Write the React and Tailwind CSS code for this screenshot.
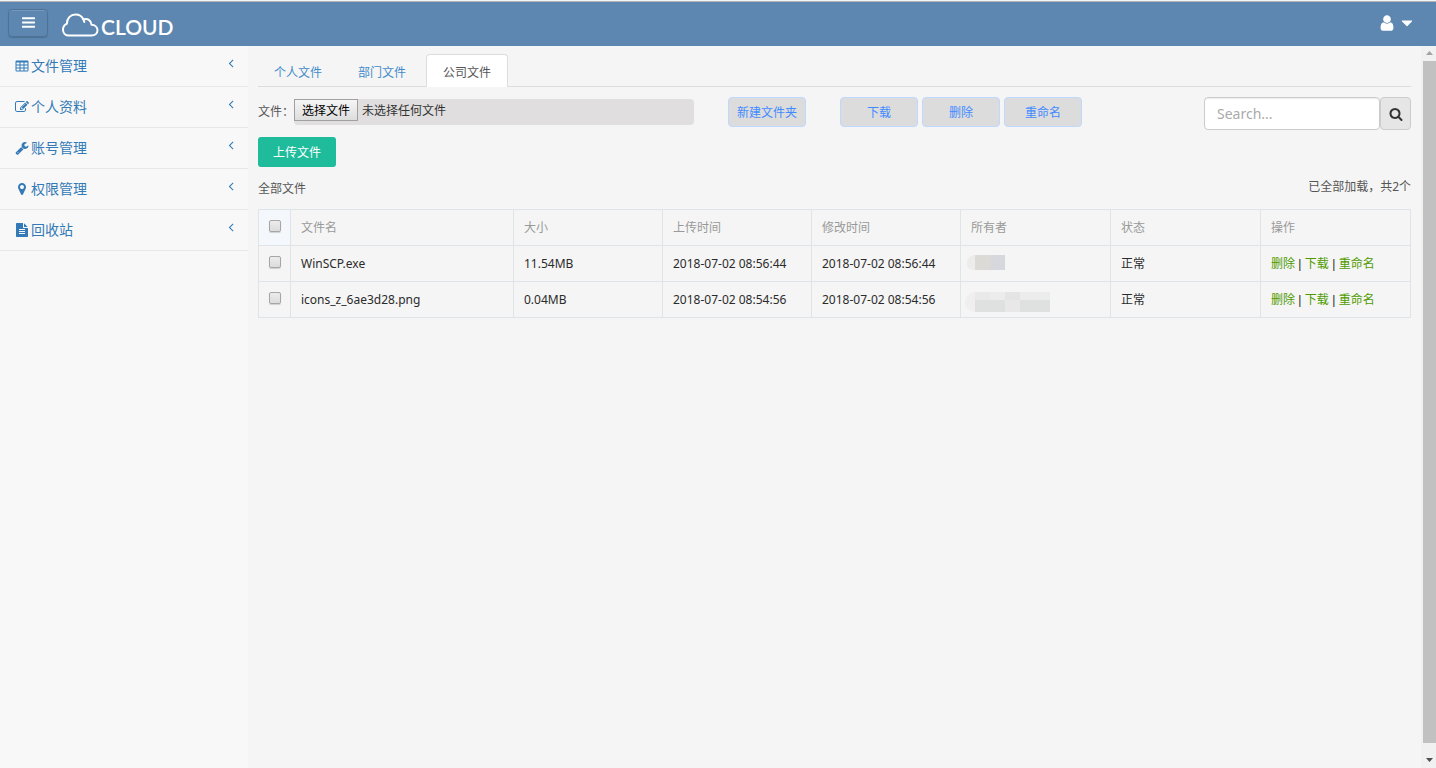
import { useState } from 'react';

const ICONS = {
  bars: 'M1664 1344v128q0 26-19 45t-45 19h-1408q-26 0-45-19t-19-45v-128q0-26 19-45t45-19h1408q26 0 45 19t19 45zm0-512v128q0 26-19 45t-45 19h-1408q-26 0-45-19t-19-45v-128q0-26 19-45t45-19h1408q26 0 45 19t19 45zm0-512v128q0 26-19 45t-45 19h-1408q-26 0-45-19t-19-45v-128q0-26 19-45t45-19h1408q26 0 45 19t19 45z',
  user: 'M1536 1399q0 109-62.5 187t-150.5 78h-854q-88 0-150.5-78t-62.5-187q0-85 8.5-160.5t31.5-152 58.5-131 94-89 134.5-34.5q131 128 313 128t313-128q76 0 134.5 34.5t94 89 58.5 131 31.5 152 8.5 160.5zm-256-887q0 159-112.5 271.5t-271.5 112.5-271.5-112.5-112.5-271.5 112.5-271.5 271.5-112.5 271.5 112.5 112.5 271.5z',
  caretDown: 'M1408 704q0 26-19 45l-448 448q-19 19-45 19t-45-19l-448-448q-19-19-19-45t19-45 45-19h896q26 0 45 19t19 45z',
  angleLeft: 'M1203 544q0 13-10 23l-393 393 393 393q10 10 10 23t-10 23l-50 50q-10 10-23 10t-23-10l-466-466q-10-10-10-23t10-23l466-466q10-10 23-10t23 10l50 50q10 10 10 23z',
  search: 'M1216 832q0-185-131.5-316.5t-316.5-131.5-316.5 131.5-131.5 316.5 131.5 316.5 316.5 131.5 316.5-131.5 131.5-316.5zm512 832q0 52-38 90t-90 38q-54 0-90-38l-343-342q-179 124-399 124-143 0-273.5-55.5t-225-150-150-225-55.5-273.5 55.5-273.5 150-225 225-150 273.5-55.5 273.5 55.5 225 150 150 225 55.5 273.5q0 220-124 399l343 343q37 37 37 90z',
  table: 'M224 192h1344a160 160 0 0 1 160 160v1088a160 160 0 0 1-160 160h-1344a160 160 0 0 1-160-160v-1088a160 160 0 0 1 160-160zM192 448v256h384v-256zM704 448v256h384v-256zM1216 448v256h384v-256zM192 832v256h384v-256zM704 832v256h384v-256zM1216 832v256h384v-256zM192 1216v256h384v-256zM704 1216v256h384v-256zM1216 1216v256h384v-256z',
  edit: 'M888 1184l116-116-152-152-116 116v56h96v96h56zm440-720q-16-16-33 1l-350 350q-17 17-1 33t33-1l350-350q17-17 1-33zm80 594v190q0 119-84.5 203.5t-203.5 84.5h-832q-119 0-203.5-84.5t-84.5-203.5v-832q0-119 84.5-203.5t203.5-84.5h832q63 0 117 25 15 7 18 23 3 17-9 29l-49 49q-14 14-32 8-23-6-45-6h-832q-66 0-113 47t-47 113v832q0 66 47 113t113 47h832q66 0 113-47t47-113v-126q0-13 9-22l64-64q15-15 35-7t20 29zm-96-738l288 288-672 672h-288v-288zm444 132l-92 92-288-288 92-92q28-28 68-28t68 28l152 152q28 28 28 68t-28 68z',
  wrench: 'M448 1472q0-26-19-45t-45-19-45 19-19 45 19 45 45 19 45-19 19-45zm644-420l-682 682q-37 37-90 37-52 0-91-37l-106-108q-38-36-38-90 0-53 38-91l681-681q39 98 114.5 173.5t173.5 114.5zm634-435q0 39-23 106-47 134-164.5 217.5t-258.5 83.5q-185 0-316.5-131.5t-131.5-316.5 131.5-316.5 316.5-131.5q58 0 121.5 16.5t107.5 46.5q16 11 16 28t-16 28l-293 169v224l193 107q5-3 79-48.5t135.5-81 70.5-35.5q15 0 23.5 10t8.5 25z',
  marker: 'M1152 640q0-106-75-181t-181-75-181 75-75 181 75 181 181 75 181-75 75-181zm256 0q0 109-33 179l-364 774q-16 33-47.5 52t-67.5 19-67.5-19-46.5-52l-365-774q-33-70-33-179 0-212 150-362t362-150 362 150 150 362z',
  file: 'M1596 476q14 14 28 36h-472v-472q22 14 36 28zm-476 164h544v1056q0 40-28 68t-68 28h-1344q-40 0-68-28t-28-68v-1600q0-40 28-68t68-28h800v544q0 40 28 68t68 28zm160 736v-64q0-14-9-23t-23-9h-704q-14 0-23 9t-9 23v64q0 14 9 23t23 9h704q14 0 23-9t9-23zm0-256v-64q0-14-9-23t-23-9h-704q-14 0-23 9t-9 23v64q0 14 9 23t23 9h704q14 0 23-9t9-23zm0-256v-64q0-14-9-23t-23-9h-704q-14 0-23 9t-9 23v64q0 14 9 23t23 9h704q14 0 23-9t9-23z',
};

const MENU = [
  { icon: 'table', label: '文件管理' },
  { icon: 'edit', label: '个人资料' },
  { icon: 'wrench', label: '账号管理' },
  { icon: 'marker', label: '权限管理' },
  { icon: 'file', label: '回收站' },
];

const TABS = ['个人文件', '部门文件', '公司文件'];

const COLUMNS = ['文件名', '大小', '上传时间', '修改时间', '所有者', '状态', '操作'];

const FILES = [
  { name: 'WinSCP.exe', size: '11.54MB', uploaded: '2018-07-02 08:56:44', modified: '2018-07-02 08:56:44', status: '正常' },
  { name: 'icons_z_6ae3d28.png', size: '0.04MB', uploaded: '2018-07-02 08:54:56', modified: '2018-07-02 08:54:56', status: '正常' },
];

function Icon({ name, className }) {
  return (
    <svg viewBox="0 0 1792 1792" fill="currentColor" fillRule={name === 'table' ? 'evenodd' : 'nonzero'} className={className} aria-hidden="true">
      <path d={ICONS[name]} />
    </svg>
  );
}

function Header() {
  return (
    <header className="flex h-[46px] items-center justify-between border-t border-gray-100 bg-[#5d87b0] pr-5 pb-[2px] pl-2 text-white shadow-[inset_0_1px_0_#b5b5b5]">
      <div className="flex items-center">
        <button
          type="button"
          aria-label="菜单"
          className="flex h-7 w-10 items-center justify-center rounded border border-[#4d7296] shadow-[inset_0_1px_0_#7499bd,0_1px_1px_#4d7296]"
        >
          <Icon name="bars" className="size-[15px]" />
        </button>
        <a href="#" className="ml-[13px] flex items-end gap-[2px] pt-1">
          <svg viewBox="0 0 38 24" className="h-6 w-[38px]" fill="none" stroke="currentColor" strokeWidth="2" strokeLinejoin="round" strokeLinecap="round" aria-hidden="true">
            <path d="M8 22.500h22.500c3.500 0 6-2.200 6-5.200 0-3.100-2.600-5.500-6-5.600-.3-4.300-4-6.700-8-5.200C21 3.200 17.700 1.500 14.500 1.500 9.500 1.500 5.800 5.300 5.900 10.700 3.300 12 2 14 2 16.700c0 3.500 2.500 5.800 6 5.800z" />
            <path d="M22.500 6.500c.5 1 .7 1.600.8 2.500" />
          </svg>
          <span className="font-['Lato'] text-[21px] leading-5 font-semibold">CLOUD</span>
        </a>
      </div>
      <button type="button" aria-label="用户" className="flex items-center gap-[2px]">
        <Icon name="user" className="size-[18px]" />
        <Icon name="caretDown" className="size-[18px]" />
      </button>
    </header>
  );
}

function Sidebar() {
  return (
    <nav className="w-[248px] shrink-0 bg-[#f8f8f8]">
      <ul>
        {MENU.map((m) => (
          <li key={m.label} className="border-b border-[#e7e7e7]">
            <a href="#" className="flex h-10 items-center pr-[10px] pl-[15px] text-sm text-[#337ab7]">
              <Icon name={m.icon} className="mr-[2px] size-[14px]" />
              <span>{m.label}</span>
              <Icon name="angleLeft" className="mb-[6px] ml-auto size-[14px]" />
            </a>
          </li>
        ))}
      </ul>
    </nav>
  );
}

function ToolButton({ children }) {
  return (
    <button type="button" className="h-[30px] w-[78px] rounded border border-[#bfd8ff] bg-[#dcdcdc] pt-[2px] text-[#428bff]">
      {children}
    </button>
  );
}

function Toolbar() {
  const [fileName, setFileName] = useState('');

  return (
    <div className="mt-[10px] flex items-start justify-between">
      <div className="flex">
        <span className="w-9 leading-[30px] whitespace-nowrap">文件：</span>
        <div className="mt-[2px] flex h-[26px] w-[400px] items-start rounded bg-[#e0dede]">
          <input id="upload" type="file" className="peer sr-only" onChange={(e) => setFileName(e.target.files[0]?.name || '')} />
          <label
            htmlFor="upload"
            className="h-[22px] w-16 border border-[#a0a0a0] bg-linear-to-b from-[#f6f6f6] to-[#dddddd] text-center leading-[22px] text-black peer-focus-visible:outline"
          >
            选择文件
          </label>
          <span className="ml-1 leading-6 text-[#333333]">{fileName || '未选择任何文件'}</span>
        </div>
        <div className="ml-[34px] flex">
          <ToolButton>新建文件夹</ToolButton>
          <div className="ml-[34px] flex gap-1">
            <ToolButton>下载</ToolButton>
            <ToolButton>删除</ToolButton>
            <ToolButton>重命名</ToolButton>
          </div>
        </div>
      </div>
      <form className="flex h-[33px]" onSubmit={(e) => e.preventDefault()}>
        <input
          type="text"
          aria-label="Search"
          placeholder="Search..."
          className="w-44 rounded border border-[#cccccc] bg-white px-3 text-sm shadow-[inset_0_1px_1px_rgba(0,0,0,0.08)] placeholder:text-[#aaaaaa]"
        />
        <button type="submit" aria-label="搜索" className="flex w-[31px] items-center justify-center rounded border border-[#cccccc] bg-[#e6e6e6] text-[#333333]">
          <Icon name="search" className="size-[14px]" />
        </button>
      </form>
    </div>
  );
}

function Checkbox({ label }) {
  return (
    <input
      type="checkbox"
      aria-label={label}
      className="mb-1 block size-3 appearance-none rounded-xs border border-[#a6a6a6] bg-linear-to-b from-[#ececec] to-[#dcdcdc] shadow-[0_1px_1px_#d0d0d0] checked:bg-[#428bca]"
    />
  );
}

// owner names are masked with mosaic blocks
function Owner({ index }) {
  if (index === 0) {
    return (
      <svg viewBox="0 0 38 20" className="-ml-1 h-5 w-[38px]" aria-hidden="true">
        <path d="M8 1v15H5a7 7 0 0 1-5-7 8 8 0 0 1 8-8z" fill="#ececea" />
        <path d="M8 1h16v15H8z" fill="#dbdad6" />
        <path d="M24 1h14v15H24z" fill="#d7d8dd" />
      </svg>
    );
  }
  return (
    <svg viewBox="0 0 86 20" className="mt-1 -ml-[6px] h-5 w-[86px]" aria-hidden="true">
      <path d="M10 0v20a10 10 0 0 1 0-20z" fill="#eeefee" />
      <path d="M10 0h75v8H10z" fill="#e9e9e9" />
      <path d="M10 8h75v12H10z" fill="#dfe0e0" />
      <path d="M40 0h15v8H40z" fill="#e4e4e4" />
      <path d="M25 0h15v8H25zM55 0h30v8H55z" fill="#ececec" />
      <path d="M40 8h15v12H40z" fill="#e8e8e8" />
    </svg>
  );
}

function FileTable() {
  return (
    <table className="mt-[10px] w-full table-fixed border-collapse text-left">
      <colgroup>
        <col className="w-8" />
        <col />
        <col className="w-[149px]" />
        <col className="w-[149px]" />
        <col className="w-[149px]" />
        <col className="w-[150px]" />
        <col className="w-[150px]" />
        <col className="w-[150px]" />
      </colgroup>
      <thead>
        <tr className="h-9 text-[#999999]">
          <th className="border border-[#dfe4e8] bg-[#f4f7fb] pl-[10px]">
            <Checkbox label="全选" />
          </th>
          {COLUMNS.map((c) => (
            <th key={c} className="border border-[#dfe4e8] px-[10px] font-normal">{c}</th>
          ))}
        </tr>
      </thead>
      <tbody>
        {FILES.map((f, i) => (
          <tr key={f.name} className="h-9 text-[#2b2b2b]">
            <td className="border border-[#dfe4e8] pl-[10px]">
              <Checkbox label={f.name} />
            </td>
            <td className="border border-[#dfe4e8] px-[10px]">{f.name}</td>
            <td className="border border-[#dfe4e8] px-[10px]">{f.size}</td>
            <td className="border border-[#dfe4e8] px-[10px] whitespace-nowrap">{f.uploaded}</td>
            <td className="border border-[#dfe4e8] px-[10px] whitespace-nowrap">{f.modified}</td>
            <td className="border border-[#dfe4e8] px-[10px]"><Owner index={i} /></td>
            <td className="border border-[#dfe4e8] px-[10px]">{f.status}</td>
            <td className="border border-[#dfe4e8] px-[10px] font-['Liberation_Sans','Noto_Sans_CJK_SC',sans-serif] whitespace-nowrap">
              <a href="#" className="text-[#4f9a00]">删除</a> | <a href="#" className="text-[#4f9a00]">下载</a> | <a href="#" className="text-[#4f9a00]">重命名</a>
            </td>
          </tr>
        ))}
      </tbody>
    </table>
  );
}

function ScrollBar() {
  return (
    <div className="flex w-[15px] shrink-0 flex-col bg-[#f1f1f1] pl-[2px]" aria-hidden="true">
      <svg viewBox="0 0 13 15" className="h-[15px] w-[13px]">
        <path d="M3 9h7L6.500 5z" fill="#a3a3a3" />
      </svg>
      <div className="grow bg-[#c1c1c1]" />
      <svg viewBox="0 0 13 25" className="h-[25px] w-[13px]">
        <path d="M3 15h7l-3.500 4z" fill="#505050" />
      </svg>
    </div>
  );
}

export default function App() {
  const [tab, setTab] = useState(2);

  return (
    <div className="flex min-h-screen flex-col bg-[#f5f5f5] font-['Noto_Sans','Noto_Sans_CJK_SC',sans-serif] text-xs text-[#555555]">
      <Header />
      <div className="flex grow">
        <Sidebar />
        <main className="min-w-0 grow px-[10px] pt-2">
          <div className="flex h-[33px] gap-1 border-b border-[#dddddd]">
            {TABS.map((t, i) => (
              <button
                key={t}
                type="button"
                onClick={() => setTab(i)}
                className={
                  i === tab
                    ? 'h-[33px] rounded-t border border-b-0 border-[#dddddd] bg-white px-4 pt-1 text-[#555555]'
                    : 'h-[33px] px-4 pt-1 text-[#428bca]'
                }
              >
                {t}
              </button>
            ))}
          </div>
          <Toolbar />
          <button type="button" className="mt-[7px] h-[30px] w-[78px] rounded-[3px] bg-[#1fbc9c] pt-[2px] text-white">
            上传文件
          </button>
          <div className="mt-3 flex items-start justify-between">
            <span className="leading-5">全部文件</span>
            <span className="leading-4">已全部加载，共2个</span>
          </div>
          <FileTable />
        </main>
        <ScrollBar />
      </div>
    </div>
  );
}
